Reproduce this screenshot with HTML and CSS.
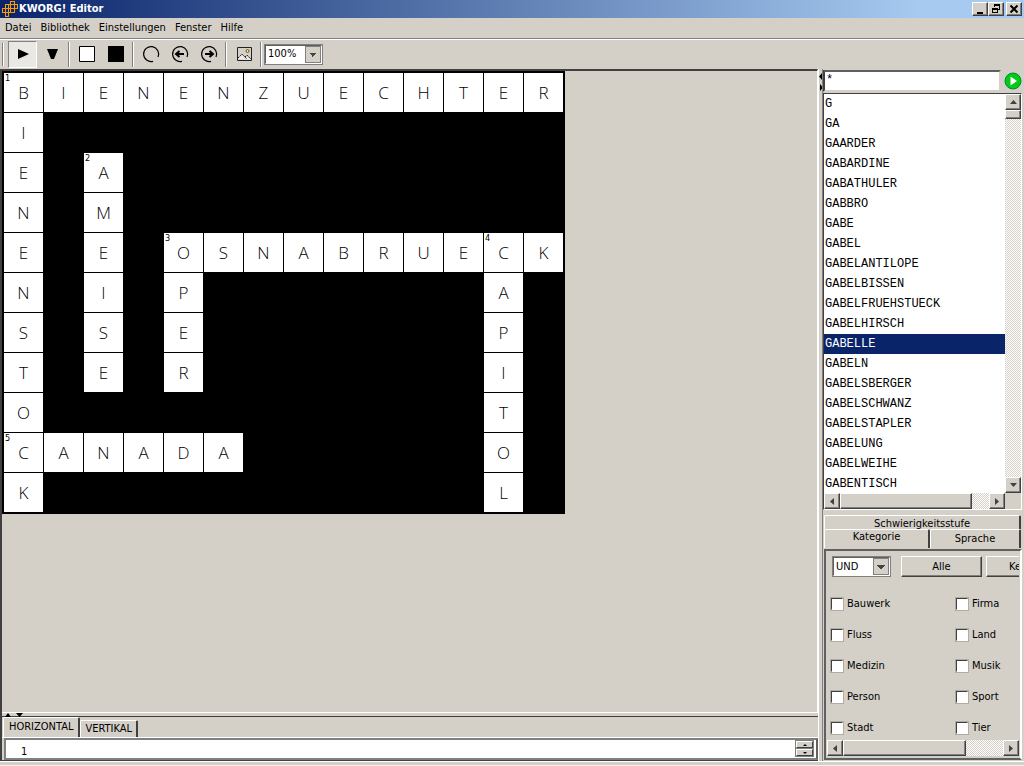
FILE: index.html
```html
<!DOCTYPE html>
<html lang="de">
<head>
    <meta charset="UTF-8">
    <meta name="viewport" content="width=device-width, initial-scale=1.0">
    <title>KWORG! Editor</title>
    <link rel="stylesheet" href="styles.css">
</head>
<body>
    <header class="titlebar">
        <svg class="logo" width="16" height="16" viewBox="0 0 16 16" shape-rendering="crispEdges" fill="none" stroke="#f90">
            <path d="M3.500 3.500h3v12h-3zM8.500 .5h4v11h-4zM3.500 3.500h12v4h-12zM.5 7.500h12v4H.5z"/>
        </svg>
        <h1>KWORG! Editor</h1>
        <div class="window-buttons">
            <button aria-label="Minimieren"><svg width="10" height="10" viewBox="0 0 10 10"><path d="M2 8h6v2H2z"/></svg></button>
            <button aria-label="Wiederherstellen"><svg width="10" height="10" viewBox="0 0 10 10" shape-rendering="crispEdges"><path d="M3 0h6v6H7V5h1V2H4v1H3zM1 4h6v5H1zM2 6v2h4V6z" fill-rule="evenodd"/></svg></button>
            <button class="close" aria-label="Schließen"><svg width="10" height="10" viewBox="0 0 10 10" stroke="#000" stroke-width="2"><path d="M1.500 1.500l7 7M8.500 1.500l-7 7"/></svg></button>
        </div>
    </header>

    <nav class="menu">
        <a href="#">Datei</a>
        <a href="#">Bibliothek</a>
        <a href="#">Einstellungen</a>
        <a href="#">Fenster</a>
        <a href="#">Hilfe</a>
    </nav>

    <div class="toolbar">
        <span class="grip"></span>
        <button class="pressed" aria-label="Horizontal"><svg width="20" height="20" viewBox="0 0 20 20"><path d="M5 5l11 5-11 5z"/></svg></button>
        <button aria-label="Vertikal"><svg width="20" height="20" viewBox="0 0 20 20"><path d="M5 5h11l-4 10H9z"/></svg></button>
        <span class="separator"></span>
        <button aria-label="Weißes Feld"><svg width="20" height="20" viewBox="0 0 20 20"><path d="M2.500 2.500h15v15h-15z" fill="#fff" stroke="#000"/></svg></button>
        <button aria-label="Schwarzes Feld"><svg width="20" height="20" viewBox="0 0 20 20"><path d="M2 2h16v16H2z"/></svg></button>
        <span class="separator"></span>
        <button aria-label="Kreis"><svg width="20" height="20" viewBox="0 0 20 20" fill="none" stroke="#000"><path d="M17 13A7.500 7.500 0 1 0 12 17.300" stroke-width="1.200"/></svg></button>
        <button aria-label="Zurück"><svg width="20" height="20" viewBox="0 0 20 20" fill="none" stroke="#000"><path d="M17 13A7.500 7.500 0 1 0 12 17.300" stroke-width="1.200"/><path d="M6 10h8M9.500 7L6 10l3.500 3" stroke-width="2"/></svg></button>
        <button aria-label="Vor"><svg width="20" height="20" viewBox="0 0 20 20" fill="none" stroke="#000"><path d="M17 13A7.500 7.500 0 1 0 12 17.300" stroke-width="1.200"/><path d="M6 10h8M10.500 7L14 10l-3.500 3" stroke-width="2"/></svg></button>
        <span class="separator"></span>
        <button aria-label="Bild"><svg width="20" height="20" viewBox="0 0 20 20" fill="none" stroke="#222"><path d="M3.500 3.500h14v13h-14z"/><path d="M4 15l4-4 3 4 2-2 4 3z" fill="#eee" stroke="none"/><path d="M4 14l4-4 5 5M11 13l2-2 4 4" stroke-dasharray="2 1"/><circle cx="13.500" cy="7" r="1.500" fill="#fe4" stroke="#653"/></svg></button>
        <span class="separator"></span>
        <select class="combo" aria-label="Zoom"><option>100%</option></select>
    </div>

    <main>
        <section class="editor">
            <div class="canvas">
                <div class="crossword" id="crossword"></div>
            </div>
            <div class="divider-h">
                <svg width="18" height="4" viewBox="0 0 18 4"><path d="M0 4h6L3 0zM11 0h7l-3.500 4z"/></svg>
            </div>
            <div class="clues">
                <div class="clue-tabs">
                    <button class="active">HORIZONTAL</button>
                    <button>VERTIKAL</button>
                </div>
                <div class="clue-list">
                    <span>1</span>
                    <div class="spinner">
                        <button aria-label="Hoch"><svg width="4" height="2" viewBox="0 0 4 2"><path d="M0 2h4L2 0z"/></svg></button>
                        <button aria-label="Runter"><svg width="4" height="2" viewBox="0 0 4 2"><path d="M0 0h4L2 2z"/></svg></button>
                    </div>
                </div>
            </div>
        </section>

        <div class="divider-v">
            <svg width="4" height="18" viewBox="0 0 4 18"><path d="M3 0v7L0 3.500zM1 11v7l3-3.500z"/></svg>
        </div>

        <aside class="library">
            <div class="search">
                <input type="text" value="*" aria-label="Suche">
                <button aria-label="Suchen"><svg width="18" height="18" viewBox="0 0 18 18"><circle cx="9" cy="9" r="8" fill="#0c1" stroke="#084"/><path d="M6.500 4.500L13 9l-6.500 4.500z" fill="#fff"/></svg></button>
            </div>

            <div class="word-box">
                <ul class="words" id="words"></ul>
                <div class="scroll vertical">
                    <button aria-label="Hoch"><svg width="7" height="4" viewBox="0 0 7 4"><path d="M0 4h7L3.500 0z"/></svg></button>
                    <span class="thumb"></span>
                    <span class="track"></span>
                    <button aria-label="Runter"><svg width="7" height="4" viewBox="0 0 7 4"><path d="M0 0h7L3.500 4z"/></svg></button>
                </div>
                <div class="scroll horizontal">
                    <button aria-label="Links"><svg width="4" height="7" viewBox="0 0 4 7"><path d="M4 0v7L0 3.500z"/></svg></button>
                    <span class="thumb"></span>
                    <span class="track"></span>
                    <button aria-label="Rechts"><svg width="4" height="7" viewBox="0 0 4 7"><path d="M0 0v7l4-3.500z"/></svg></button>
                </div>
            </div>

            <div class="filter-tabs">
                <button class="wide">Schwierigkeitsstufe</button>
                <button class="active">Kategorie</button>
                <button>Sprache</button>
            </div>
            <div class="filter">
                <div class="filter-actions">
                    <select class="combo" aria-label="Verknüpfung"><option>UND</option></select>
                    <button>Alle</button>
                    <button>Keine</button>
                </div>
                <div class="categories">
                    <label><input type="checkbox">Bauwerk</label>
                    <label><input type="checkbox">Firma</label>
                    <label><input type="checkbox">Fluss</label>
                    <label><input type="checkbox">Land</label>
                    <label><input type="checkbox">Medizin</label>
                    <label><input type="checkbox">Musik</label>
                    <label><input type="checkbox">Person</label>
                    <label><input type="checkbox">Sport</label>
                    <label><input type="checkbox">Stadt</label>
                    <label><input type="checkbox">Tier</label>
                </div>
                <div class="scroll horizontal">
                    <button aria-label="Links"><svg width="4" height="7" viewBox="0 0 4 7"><path d="M4 0v7L0 3.500z"/></svg></button>
                    <span class="thumb"></span>
                    <span class="track"></span>
                    <button aria-label="Rechts"><svg width="4" height="7" viewBox="0 0 4 7"><path d="M0 0v7l4-3.500z"/></svg></button>
                </div>
            </div>
        </aside>
    </main>
    <footer class="statusbar"></footer>

    <script src="script.js"></script>
</body>
</html>
```
FILE: styles.css
```css
/* General styles */
* {
    box-sizing: border-box;
}

body {
    margin: 0;
    height: 100vh;
    display: flex;
    flex-direction: column;
    overflow: hidden;
    background: #d4d0c8;
    color: #000;
    font-family: "DejaVu Sans Condensed", "DejaVu Sans", sans-serif;
    font-size: 11px;
    line-height: 14px;
}

button,
input,
select {
    font: inherit;
    color: inherit;
    margin: 0;
    padding: 0;
    border-radius: 0;
}

button {
    display: flex;
    align-items: center;
    justify-content: center;
    background: #d4d0c8;
    border: 1px solid;
    border-color: #fff #404040 #404040 #fff;
}

svg {
    display: block;
    flex: none;
}

/* Title bar */
.titlebar {
    display: flex;
    align-items: center;
    flex: none;
    height: 18px;
    padding: 0 2px;
    color: #fff;
    background: linear-gradient(to right, #0a246a, #a6caf0 90%);
}

.titlebar h1 {
    flex: 1;
    margin: 0 0 0 1px;
    font-size: 11px;
}

.window-buttons {
    display: flex;
}

.window-buttons button {
    width: 16px;
    height: 14px;
    box-shadow: inset -1px -1px #808080;
}

.window-buttons .close {
    margin-left: 2px;
}

/* Menu */
.menu {
    display: flex;
    flex: none;
    gap: 9px;
    height: 22px;
    padding: 3px 5px;
    border-bottom: 1px solid #fff;
    box-shadow: inset 0 -1px #808080;
}

.menu a {
    color: inherit;
    text-decoration: none;
}

/* Toolbar */
.toolbar {
    display: flex;
    align-items: center;
    flex: none;
    height: 29px;
    padding: 0 2px 1px;
}

.toolbar button {
    width: 29px;
    height: 27px;
    border: none;
}

.toolbar .pressed {
    background: #eae8e4;
    border: 1px solid;
    border-color: #808080 #fff #fff #808080;
}

.grip,
.separator {
    width: 2px;
    height: 25px;
    border-left: 1px solid #808080;
    border-right: 1px solid #fff;
}

.grip {
    height: 23px;
    margin-right: 4px;
}

.separator {
    margin: 0 2px;
}

.combo {
    appearance: none;
    flex: none;
    width: 59px;
    height: 21px;
    padding: 0 2px;
    border: 2px solid;
    border-color: #606060 #fff #fff #606060;
    outline: 1px solid #808080;
    outline-offset: -1px;
    background:
        conic-gradient(from -45deg at 50% 100%, #444 90deg, transparent 0) right 4px top 7px / 8px 4px no-repeat,
        linear-gradient(#d4d0c8, #d4d0c8) right 1px top 1px / 14px 15px no-repeat,
        linear-gradient(#808080, #808080) right / 16px 17px no-repeat,
        #fff;
}

/* Main area */
main {
    display: flex;
    flex: 1;
    min-height: 0;
}

.editor {
    display: flex;
    flex-direction: column;
    flex: 1;
    min-width: 0;
    border-left: 2px solid #404040;
    border-bottom: 1px solid #404040;
}

.canvas {
    flex: 1;
    min-height: 0;
    overflow: hidden;
    border-top: 2px solid #404040;
    border-right: 1px solid #fff;
    border-bottom: 1px solid #fff;
}

.crossword {
    display: grid;
    grid-template-columns: repeat(14, 39px);
    grid-auto-rows: 39px;
    gap: 1px;
    width: max-content;
    padding: 2px;
    background: #000;
}

.cell {
    display: grid;
    place-items: center;
    position: relative;
    background: #fff;
    font-family: "Open Sans", sans-serif;
    font-size: 17px;
    font-weight: 300;
}

.cell.block {
    background: #000;
}

.cell small {
    position: absolute;
    top: 0;
    left: 1px;
    font-family: "DejaVu Sans Condensed", sans-serif;
    font-size: 9px;
    font-weight: 400;
    line-height: 10px;
}

.divider-h {
    height: 4px;
    padding-left: 3px;
    border-bottom: 1px solid #404040;
}

.divider-v {
    width: 4px;
    padding-top: 4px;
    border-left: 1px solid #fff;
}

/* Clues */
.clue-tabs {
    display: flex;
    align-items: flex-end;
    height: 21px;
    padding: 1px 1px 0;
    border-bottom: 1px solid #fff;
}

.clue-tabs button {
    height: 17px;
    padding: 0 4px;
    border-bottom: none;
    border-right-width: 2px;
    border-radius: 2px 2px 0 0;
}

.clue-tabs .active {
    height: 20px;
    padding: 0 5px 2px;
}

.clue-list {
    display: flex;
    align-items: flex-start;
    height: 22px;
    margin-left: 2px;
    padding: 1px 3px 0 15px;
    border: 2px solid;
    border-color: #808080 #606060 #808080 #808080;
    background: #fff;
}

.clue-list span {
    flex: 1;
    padding-top: 4px;
}

.spinner button {
    width: 17px;
    height: 7px;
    box-shadow: 0 0 0 1px #808080;
}

.spinner button + button {
    margin-top: 1px;
}

/* Library */
.library {
    display: flex;
    flex-direction: column;
    width: 202px;
    border-left: 1px solid #808080;
}

.search {
    display: flex;
    align-items: center;
    height: 24px;
    flex: none;
}

.search input {
    flex: 1;
    min-width: 0;
    height: 22px;
    padding: 0 1px 2px;
    border: 2px solid;
    border-color: #606060 #d4d0c8 #d4d0c8 #404040;
    outline: none;
    font-family: "Liberation Mono", monospace;
    font-size: 12px;
}

.search button {
    width: 23px;
    height: 22px;
    border: none;
}

.word-box {
    display: grid;
    grid-template-columns: 1fr 16px;
    grid-template-rows: 1fr 16px;
    flex: 1;
    min-height: 0;
    margin-right: 2px;
    border: 1px solid;
    border-color: #404040 #fff #fff #404040;
}

.words {
    overflow: hidden;
    margin: 0;
    padding: 0;
    list-style: none;
    background: #fff;
    font-family: "Liberation Mono", monospace;
    font-size: 12px;
    line-height: 20px;
}

.words li {
    height: 20px;
    padding-left: 1px;
}

.words .selected {
    background: #0a246a;
    color: #fff;
}

/* Scroll bars */
.scroll {
    display: flex;
    background: #d4d0c8;
}

.scroll.vertical {
    flex-direction: column;
}

.scroll button {
    flex: none;
    width: 16px;
    height: 16px;
    box-shadow: inset -1px -1px #808080;
}

.scroll svg {
    fill: #404040;
}

.track {
    flex: 1;
    background: repeating-conic-gradient(#fff 0 25%, #d4d0c8 0 50%) 0 0 / 2px 2px;
}

.thumb {
    background: #d4d0c8;
    border: 1px solid;
    border-color: #fff #404040 #404040 #fff;
    box-shadow: inset -1px -1px #808080;
}

.vertical .thumb {
    height: 9px;
}

.horizontal .thumb {
    width: 73%;
}

.filter .thumb {
    width: 64%;
}

/* Filter */
.filter-tabs {
    display: grid;
    grid-template-columns: 106px 1fr;
    grid-template-rows: 14px 19px;
    flex: none;
    margin: 5px 3px 0 1px;
}

.filter-tabs button {
    border-bottom: none;
    border-right-width: 2px;
    border-radius: 2px 2px 0 0;
    overflow: hidden;
}

.filter-tabs .wide {
    grid-column: 1 / 3;
    align-items: flex-start;
    padding-top: 1px;
}

.filter-tabs .active {
    padding-bottom: 4px;
}

.filter {
    flex: none;
    overflow: hidden;
    margin: 1px 2px 1px 1px;
    padding: 5px 1px 2px;
    border: 2px solid #606060;
    border-right-color: #fff;
}

.filter-actions {
    display: flex;
    overflow: hidden;
    padding-left: 5px;
}

.filter-actions button {
    flex: none;
    width: 81px;
    height: 21px;
    margin-left: 10px;
    box-shadow: inset -1px -1px #808080;
}

.filter-actions button + button {
    margin-left: 4px;
    justify-content: flex-start;
    padding-left: 22px;
}

.categories {
    display: grid;
    grid-template-columns: 125px 1fr;
    grid-auto-rows: 31px;
    margin: 11px 0 -3px 4px;
}

.categories label {
    display: flex;
    align-items: center;
    gap: 4px;
}

.categories input {
    appearance: none;
    width: 12px;
    height: 12px;
    background: #fff;
    border: 1px solid;
    border-color: #404040 #fff #fff #404040;
    outline: 1px solid #b0aca4;
}

.categories input:checked {
    background: #0a246a;
}

.statusbar {
    flex: none;
    height: 5px;
    border-top: 1px solid #fff;
    border-bottom: 1px solid #f4f2ee;
}
```
FILE: script.js
```js
// A dot is a black field
const rows = [
    'BIENENZUECHTER',
    'I.............',
    'E.A...........',
    'N.M...........',
    'E.E.OSNABRUECK',
    'N.I.P.......A.',
    'S.S.E.......P.',
    'T.E.R.......I.',
    'O...........T.',
    'CANADA......O.',
    'K...........L.'
];

// Numbers of the fields where a word starts, as row-column
const numbers = { '0-0': 1, '2-2': 2, '4-4': 3, '4-12': 4, '9-0': 5 };

const words = [
    'G', 'GA', 'GAARDER', 'GABARDINE', 'GABATHULER', 'GABBRO', 'GABE', 'GABEL',
    'GABELANTILOPE', 'GABELBISSEN', 'GABELFRUEHSTUECK', 'GABELHIRSCH', 'GABELLE',
    'GABELN', 'GABELSBERGER', 'GABELSCHWANZ', 'GABELSTAPLER', 'GABELUNG',
    'GABELWEIHE', 'GABENTISCH'
];

const crossword = document.getElementById('crossword');
rows.forEach((row, y) => {
    [...row].forEach((letter, x) => {
        const cell = document.createElement('div');
        cell.className = letter === '.' ? 'cell block' : 'cell';
        if (letter !== '.') {
            cell.textContent = letter;
        }
        const number = numbers[`${y}-${x}`];
        if (number) {
            const label = document.createElement('small');
            label.textContent = number;
            cell.appendChild(label);
        }
        crossword.appendChild(cell);
    });
});

const list = document.getElementById('words');
words.forEach((word) => {
    const item = document.createElement('li');
    item.textContent = word;
    list.appendChild(item);
});

const select = (item) => {
    list.querySelectorAll('.selected').forEach((other) => other.classList.remove('selected'));
    item.classList.add('selected');
};

select(list.children[words.indexOf('GABELLE')]);

list.addEventListener('click', (e) => {
    if (e.target.tagName === 'LI') {
        select(e.target);
    }
});
```
